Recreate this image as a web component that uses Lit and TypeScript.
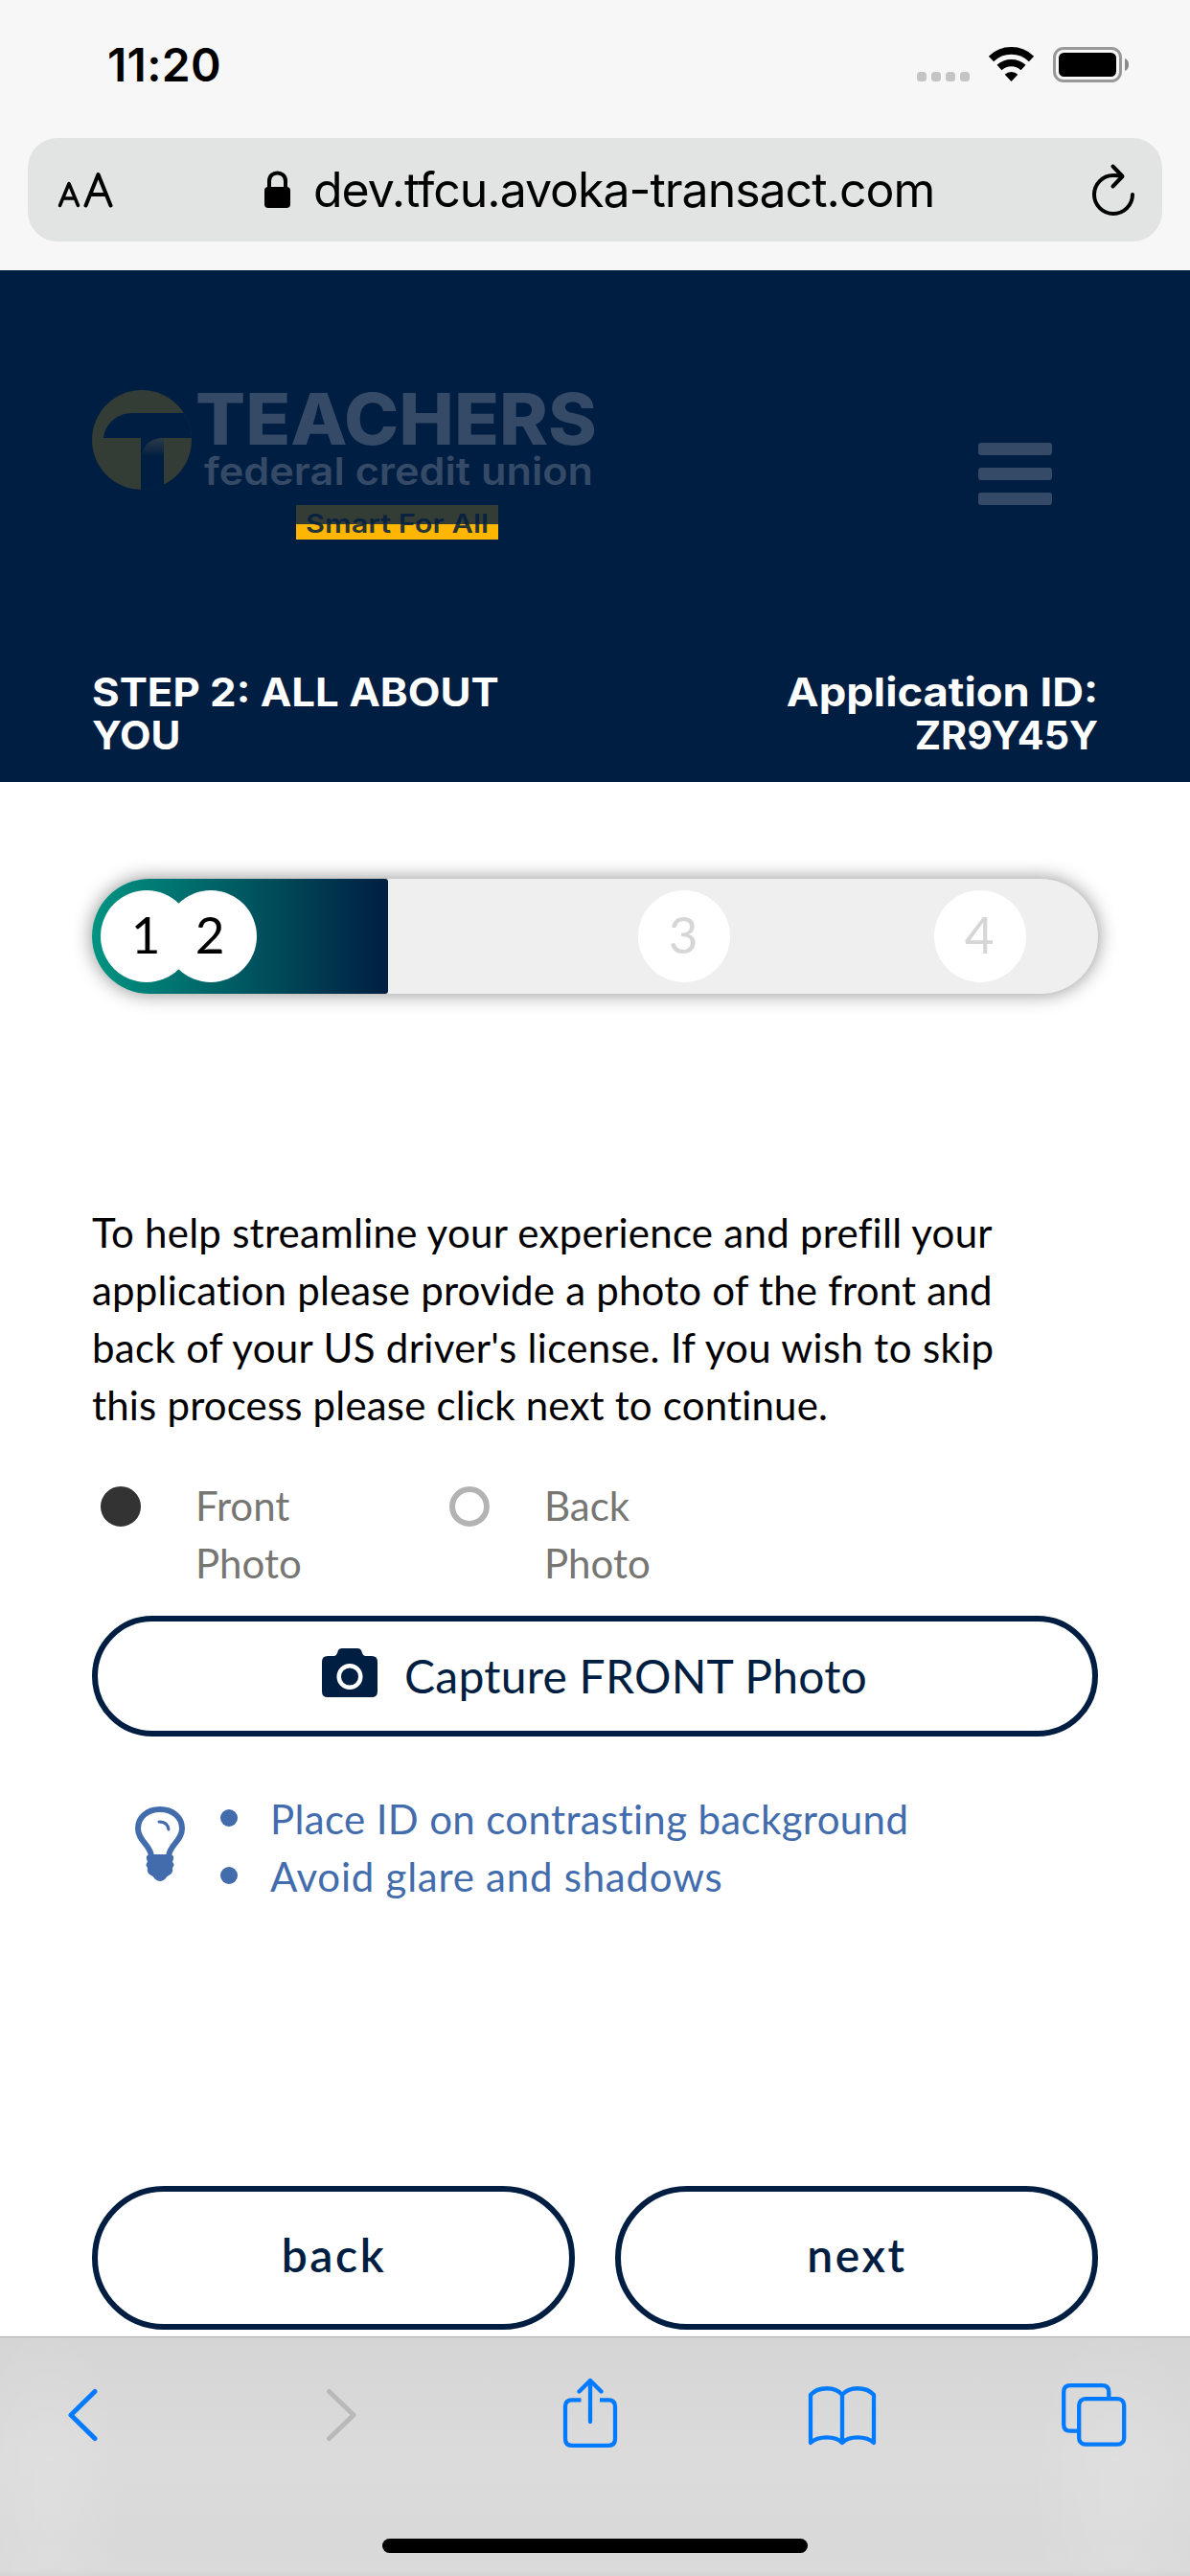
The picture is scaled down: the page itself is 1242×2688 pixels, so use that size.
import { LitElement, html, css, svg } from "lit";
import { customElement, property } from "lit/decorators.js";
import { classMap } from "lit/directives/class-map.js";

@customElement("status-bar")
class StatusBar extends LitElement {
  static styles = css`
    :host { display: flex; justify-content: space-between; height: 144px; box-sizing: border-box; padding: 39px 64px 0 112px; font-family: Inter, sans-serif; color: #000; }
    .time { font-size: 48px; font-weight: 600; line-height: 58px; letter-spacing: 0.3px; }
    .icons { width: 221px; height: 37px; margin-top: 10px; }
  `;
  render() {
    return html`
      <span class="time">11:20</span>
      <svg class="icons" viewBox="957 49 221 37">
        ${[957, 972, 987, 1002].map((x) => svg`<rect x=${x} y="75" width="10" height="10" rx="3.5" fill="#c4c4c4" />`)}
        <g fill="none" stroke="#000">
          <path d="M1034.5 61.5 A30 30 0 0 1 1076.500 61.500" stroke-width="7.600" />
          <path d="M1043 70.500 A18.500 18.500 0 0 1 1068 70.500" stroke-width="7.400" />
        </g>
        <path d="M1055.500 85 L1048.700 77.800 A9.800 9.800 0 0 1 1062.300 77.800 Z" fill="#000" />
        <rect x="1100.500" y="50.500" width="69" height="34" rx="9.500" fill="none" stroke="#989898" stroke-width="3" />
        <rect x="1105" y="55" width="60" height="25" rx="5.500" fill="#000" />
        <path d="M1174 61 C1179.500 63 1179.500 72 1174 74 Z" fill="#8a8a8a" />
      </svg>
    `;
  }
}

@customElement("address-bar")
class AddressBar extends LitElement {
  static styles = css`
    :host { display: block; padding: 0 29px 30px; }
    .field { display: flex; align-items: center; height: 108px; border-radius: 31px; background: #e2e4e3; font-family: Inter, sans-serif; color: #000; }
    .size { width: 58px; height: 40px; margin-left: 31px; }
    .lock { width: 27px; height: 39px; margin-left: 158px; margin-top: -1px; }
    .url { flex: 1; margin-left: 24px; font-size: 50px; line-height: 60px; letter-spacing: -1.02px; white-space: nowrap; }
    .reload { width: 46px; height: 56px; margin-right: 28px; }
  `;
  render() {
    return html`
      <div class="field">
        <svg class="size" viewBox="60 179 58 40" fill="none" stroke="#000" stroke-linecap="round" stroke-linejoin="round">
          <path d="M62.500 215.500 L72 192.500 L81.500 215.500 M66 208 H78" stroke-width="3.500" />
          <path d="M89.500 215.500 L102.500 183 L115.500 215.500 M94 204 H111" stroke-width="4" />
        </svg>
        <svg class="lock" viewBox="276 178 27 39">
          <rect x="276" y="195" width="27" height="22" rx="4" />
          <path d="M281 197 V189 C281 177.500 298 177.500 298 189 V197" fill="none" stroke="#000" stroke-width="4" />
        </svg>
        <span class="url">dev.tfcu.avoka-transact.com</span>
        <svg class="reload" viewBox="1139 170 46 56" fill="none" stroke="#000" stroke-width="4" stroke-linecap="round" stroke-linejoin="round">
          <path d="M1182 203 A20 20 0 1 1 1162 183 Q1167 183 1171 184" />
          <path d="M1161.500 173.500 L1171.500 184 L1161.500 194.500" />
        </svg>
      </div>
    `;
  }
}

@customElement("site-header")
class SiteHeader extends LitElement {
  static styles = css`
    :host { display: flex; flex-direction: column; height: 534px; box-sizing: border-box; padding: 124px 96px 0; background: #001e41; color: #fff; }
    .brand { display: flex; justify-content: space-between; height: 160px; }
    .logo { width: 530px; height: 160px; overflow: visible; }
    .menu { display: flex; flex-direction: column; gap: 13px; margin: 56px 48px 0 0; }
    .menu span { width: 77px; height: 13px; border-radius: 3px; background: #354a66; }
    .info { display: flex; justify-content: space-between; margin-top: 134px; font: 700 41px/45px Inter, sans-serif; }
    .id { text-align: right; }
    .row { display: block; white-space: nowrap; }
    .step .row { transform: scaleX(1.067); transform-origin: left; }
    .step .you { transform: scaleX(1.03); }
    .id .row { transform: scaleX(1.106); transform-origin: right; }
    .id .code { transform: scaleX(1.005); }
  `;
  render() {
    return html`
      <div class="brand">
        <svg class="logo" viewBox="96 406 530 160">
          <defs>
            <clipPath id="disc"><circle cx="148" cy="459" r="52" /></clipPath>
            <linearGradient id="stem" x1="0" y1="0" x2="0" y2="1">
              <stop offset="0" stop-color="#2c3a48" />
              <stop offset="0.350" stop-color="#001e41" />
            </linearGradient>
          </defs>
          <g clip-path="url(#disc)">
            <rect x="96" y="406" width="106" height="106" fill="#343c36" />
            <path d="M108 457 C110 442 122 431 138 431 H204 V457 H171 V514 H147 V457 Z" fill="#001e41" />
            <path d="M148 514 V478 C148 464 158 457 171 457 V514 Z" fill="url(#stem)" />
          </g>
          <text x="204" y="464" textLength="419" font-family="Inter" font-weight="800" font-size="74" fill="#354a66" lengthAdjust="spacingAndGlyphs">TEACHERS</text>
          <text x="213" y="506" textLength="406" font-family="Inter" font-weight="600" font-size="39.500" fill="#354a66" lengthAdjust="spacingAndGlyphs">federal credit union</text>
          <rect x="309" y="527" width="211" height="20" fill="#343c36" />
          <rect x="309" y="547" width="211" height="16" fill="#ffb600" />
          <text x="319" y="556" textLength="191" font-family="Inter" font-weight="600" font-size="27.500" fill="#001e41" fill-opacity="0.850" lengthAdjust="spacingAndGlyphs">Smart For All</text>
        </svg>
        <div class="menu"><span></span><span></span><span></span></div>
      </div>
      <div class="info">
        <div class="step"><span class="row">STEP 2: ALL ABOUT</span><span class="row you">YOU</span></div>
        <div class="id"><span class="row">Application ID:</span><span class="row code">ZR9Y45Y</span></div>
      </div>
    `;
  }
}

@customElement("step-progress")
class StepProgress extends LitElement {
  static styles = css`
    :host { display: block; }
    .track { position: relative; height: 120px; border-radius: 60px; background: #efefef; box-shadow: 0 0 20px rgba(0, 0, 0, 0.45); }
    .fill { height: 120px; width: 309px; border-radius: 60px 3px 3px 60px; background: linear-gradient(90deg, #009482, #001e41); }
    .dot { position: absolute; top: 12px; display: flex; align-items: center; justify-content: center; box-sizing: border-box; width: 96px; height: 96px; padding: 0 2px 4px 0; border-radius: 50%; background: #fff; color: #d6d6d6; font: 400 53px/64px Lato, sans-serif; }
    .done { color: #000; }
  `;
  private steps = [
    { n: 1, left: 9, done: true },
    { n: 2, left: 76, done: true },
    { n: 3, left: 570, done: false },
    { n: 4, left: 879, done: false },
  ];
  render() {
    return html`
      <div class="track">
        <div class="fill"></div>
        ${this.steps.map((s) => html`<span class=${classMap({ dot: true, done: s.done })} style="left:${s.left}px">${s.n}</span>`)}
      </div>
    `;
  }
}

@customElement("photo-step")
class PhotoStep extends LitElement {
  static styles = css`
    :host { display: block; font: 400 42px/60px Lato, sans-serif; font-variant-ligatures: none; color: #000; }
    .intro { margin: 0; }
    .row { display: block; white-space: nowrap; }
    .choices { display: flex; margin-top: 45px; color: #767672; }
    .choice { display: flex; width: 364px; box-sizing: border-box; padding-left: 9px; }
    .radio { width: 42px; height: 42px; margin: 10px 57px 0 0; box-sizing: border-box; border-radius: 50%; border: 6px solid #b3b3b3; }
    .on { background: #333; border-color: #333; }
    .capture { display: flex; align-items: center; height: 126px; margin-top: 25px; padding-left: 234px; box-sizing: border-box; border: 6px solid #001e41; border-radius: 63px; color: #001e41; font-size: 48px; letter-spacing: 0.25px; }
    .camera { width: 58px; height: 51px; margin: -7px 28px 0 0; }
    .tips { display: flex; margin-top: 56px; padding-left: 45px; color: #436cad; }
    .bulb { width: 52px; height: 78px; margin-top: 17px; }
    .list { margin: 0 0 0 37px; padding: 0; list-style: none; }
    .tip { display: flex; align-items: flex-start; height: 60px; white-space: nowrap; }
    .bullet { width: 18px; height: 18px; border-radius: 50%; background: #436cad; margin: 20px 34px 0 0; }
  `;
  private intro = [
    { text: "To help streamline your experience and prefill your", gap: 0.26 },
    { text: "application please provide a photo of the front and", gap: 0.2 },
    { text: "back of your US driver's license. If you wish to skip", gap: 0.34 },
    { text: "this process please click next to continue.", gap: 0.18 },
  ];
  private tips = [
    { text: "Place ID on contrasting background", gap: 0.36 },
    { text: "Avoid glare and shadows", gap: 0.76 },
  ];
  render() {
    return html`
      <p class="intro">${this.intro.map((t) => html`<span class="row" style="letter-spacing:${t.gap}px">${t.text}</span>`)}</p>
      <div class="choices">
        <label class="choice"><span class="radio on"></span><span>Front<br />Photo</span></label>
        <label class="choice"><span class="radio"></span><span>Back<br />Photo</span></label>
      </div>
      <div class="capture">
        <svg class="camera" viewBox="336 1720 58 51">
          <path d="M342 1728 H349 Q351 1728 352 1725 L353 1722 Q354 1720 357 1720 H373 Q376 1720 377 1722 L378 1725 Q379 1728 381 1728 H388 Q394 1728 394 1734 V1765 Q394 1771 388 1771 H342 Q336 1771 336 1765 V1734 Q336 1728 342 1728 Z" fill="#001e41" />
          <circle cx="365" cy="1749.500" r="11.300" fill="none" stroke="#fff" stroke-width="4.500" />
        </svg>
        <span>Capture FRONT Photo</span>
      </div>
      <div class="tips">
        <svg class="bulb" viewBox="141 1885 52 78">
          <path d="M158 1937 C157 1925 144 1921 144 1908 C144 1896 154 1888 167 1888 C180 1888 190 1896 190 1908 C190 1921 177 1925 176 1937" fill="none" stroke="#436cad" stroke-width="6" />
          <path d="M166 1901 Q175 1901 176 1909" fill="none" stroke="#436cad" stroke-width="3" stroke-linecap="round" />
          <path d="M156 1935 H178 Q182 1936 181 1940 L180 1943 Q183 1946 180 1949 Q181 1955 176 1957 Q174 1958 172 1961 Q167 1965 162 1961 Q160 1958 158 1957 Q153 1955 154 1949 Q151 1946 154 1943 L153 1940 Q152 1936 156 1935 Z" fill="#436cad" />
        </svg>
        <ul class="list">${this.tips.map((t) => html`<li class="tip"><span class="bullet"></span><span style="letter-spacing:${t.gap}px">${t.text}</span></li>`)}</ul>
      </div>
    `;
  }
}

@customElement("pill-button")
class PillButton extends LitElement {
  @property() label = "";
  static styles = css`
    :host { flex: 1; display: flex; }
    .pill { flex: 1; height: 150px; box-sizing: border-box; border: 6px solid #001e41; border-radius: 75px; background: #fff; color: #001e41; font: 600 48px/58px Lato, sans-serif; letter-spacing: 2.6px; text-align: center; padding: 0 0 6px 1px; }
  `;
  render() {
    return html`<button class="pill">${this.label}</button>`;
  }
}

@customElement("browser-toolbar")
class BrowserToolbar extends LitElement {
  static styles = css`
    :host { display: flex; flex-direction: column; align-items: center; height: 250px; box-sizing: border-box; border-top: 1px solid #a9a9a9; background: radial-gradient(80px 180px at 50px 160px, rgba(255, 255, 255, 0.12), transparent), radial-gradient(90px 180px at 1165px 160px, rgba(255, 255, 255, 0.12), transparent), linear-gradient(180deg, #d5d5d5, #dbdbdb 50%, #d9d9d9 85%, #dadada 97%, #d4d4d4); }
    .icons { display: flex; align-self: stretch; height: 74px; padding: 42px 0 0 69px; }
    .icon { height: 74px; flex: none; }
    .chevron { width: 35px; }
    .forward { margin-left: 235px; }
    .share { width: 58px; margin-left: 213px; }
    .book { width: 72px; margin-left: 198px; }
    .tabs { width: 69px; margin-left: 193px; }
    .home { width: 444px; height: 15px; margin-top: 94px; border-radius: 8px; background: #000; }
  `;
  render() {
    return html`
      <div class="icons">
        <svg class="icon chevron" viewBox="69 2481 35 74" fill="none" stroke="#007aff" stroke-width="5" stroke-linecap="round" stroke-linejoin="round"><path d="M99 2495.500 L74 2520 L99 2544.500" /></svg>
        <svg class="icon chevron forward" viewBox="339 2481 35 74" fill="none" stroke="#b9b9b9" stroke-width="5" stroke-linecap="round" stroke-linejoin="round"><path d="M343.500 2495.500 L369 2520 L343.500 2544.500" /></svg>
        <svg class="icon share" viewBox="587 2481 58 74" fill="none" stroke="#007aff" stroke-width="4.300" stroke-linecap="round" stroke-linejoin="round">
          <path d="M606.500 2504.300 H597 Q590 2504.300 590 2511 V2545 Q590 2551.800 597 2551.800 H635 Q642 2551.800 642 2545 V2511 Q642 2504.300 635 2504.300 H626" stroke-linecap="butt" />
          <path d="M616 2527 V2484.500 M604.500 2495.500 L616 2484 L627.500 2495.500" />
        </svg>
        <svg class="icon book" viewBox="843 2481 72 74" fill="none" stroke="#007aff" stroke-width="4.300" stroke-linecap="round" stroke-linejoin="round">
          <path d="M846 2549 V2499 C854 2490 872 2490 879 2499 C886 2490 904 2490 912 2499 V2549 C904 2541.500 886 2541.500 879 2549 C872 2541.500 854 2541.500 846 2549 Z M879 2499 V2549" />
        </svg>
        <svg class="icon tabs" viewBox="1108 2481 69 74" fill="none" stroke="#007aff" stroke-width="4.300">
          <path d="M1124.500 2536.700 H1117 Q1110.200 2536.700 1110.200 2530 V2496 Q1110.200 2489.200 1117 2489.200 H1150.500 Q1157.300 2489.200 1157.300 2496 V2503" />
          <rect x="1126.200" y="2503.200" width="47" height="47.500" rx="6.500" />
        </svg>
      </div>
      <div class="home"></div>
    `;
  }
}

@customElement("app-root")
class AppRoot extends LitElement {
  static styles = css`
    :host { display: flex; flex-direction: column; width: 1242px; height: 2688px; overflow: hidden; background: #fff; }
    .chrome { height: 282px; background: #f7f7f7; }
    .page { height: 1622px; box-sizing: border-box; padding: 101px 96px 0; }
    .body { margin-top: 219px; }
    .actions { display: flex; gap: 42px; margin-top: 293px; }
  `;
  render() {
    return html`
      <div class="chrome"><status-bar></status-bar><address-bar></address-bar></div>
      <site-header></site-header>
      <main class="page">
        <step-progress></step-progress>
        <photo-step class="body"></photo-step>
        <div class="actions"><pill-button label="back"></pill-button><pill-button label="next"></pill-button></div>
      </main>
      <browser-toolbar></browser-toolbar>
    `;
  }
}
